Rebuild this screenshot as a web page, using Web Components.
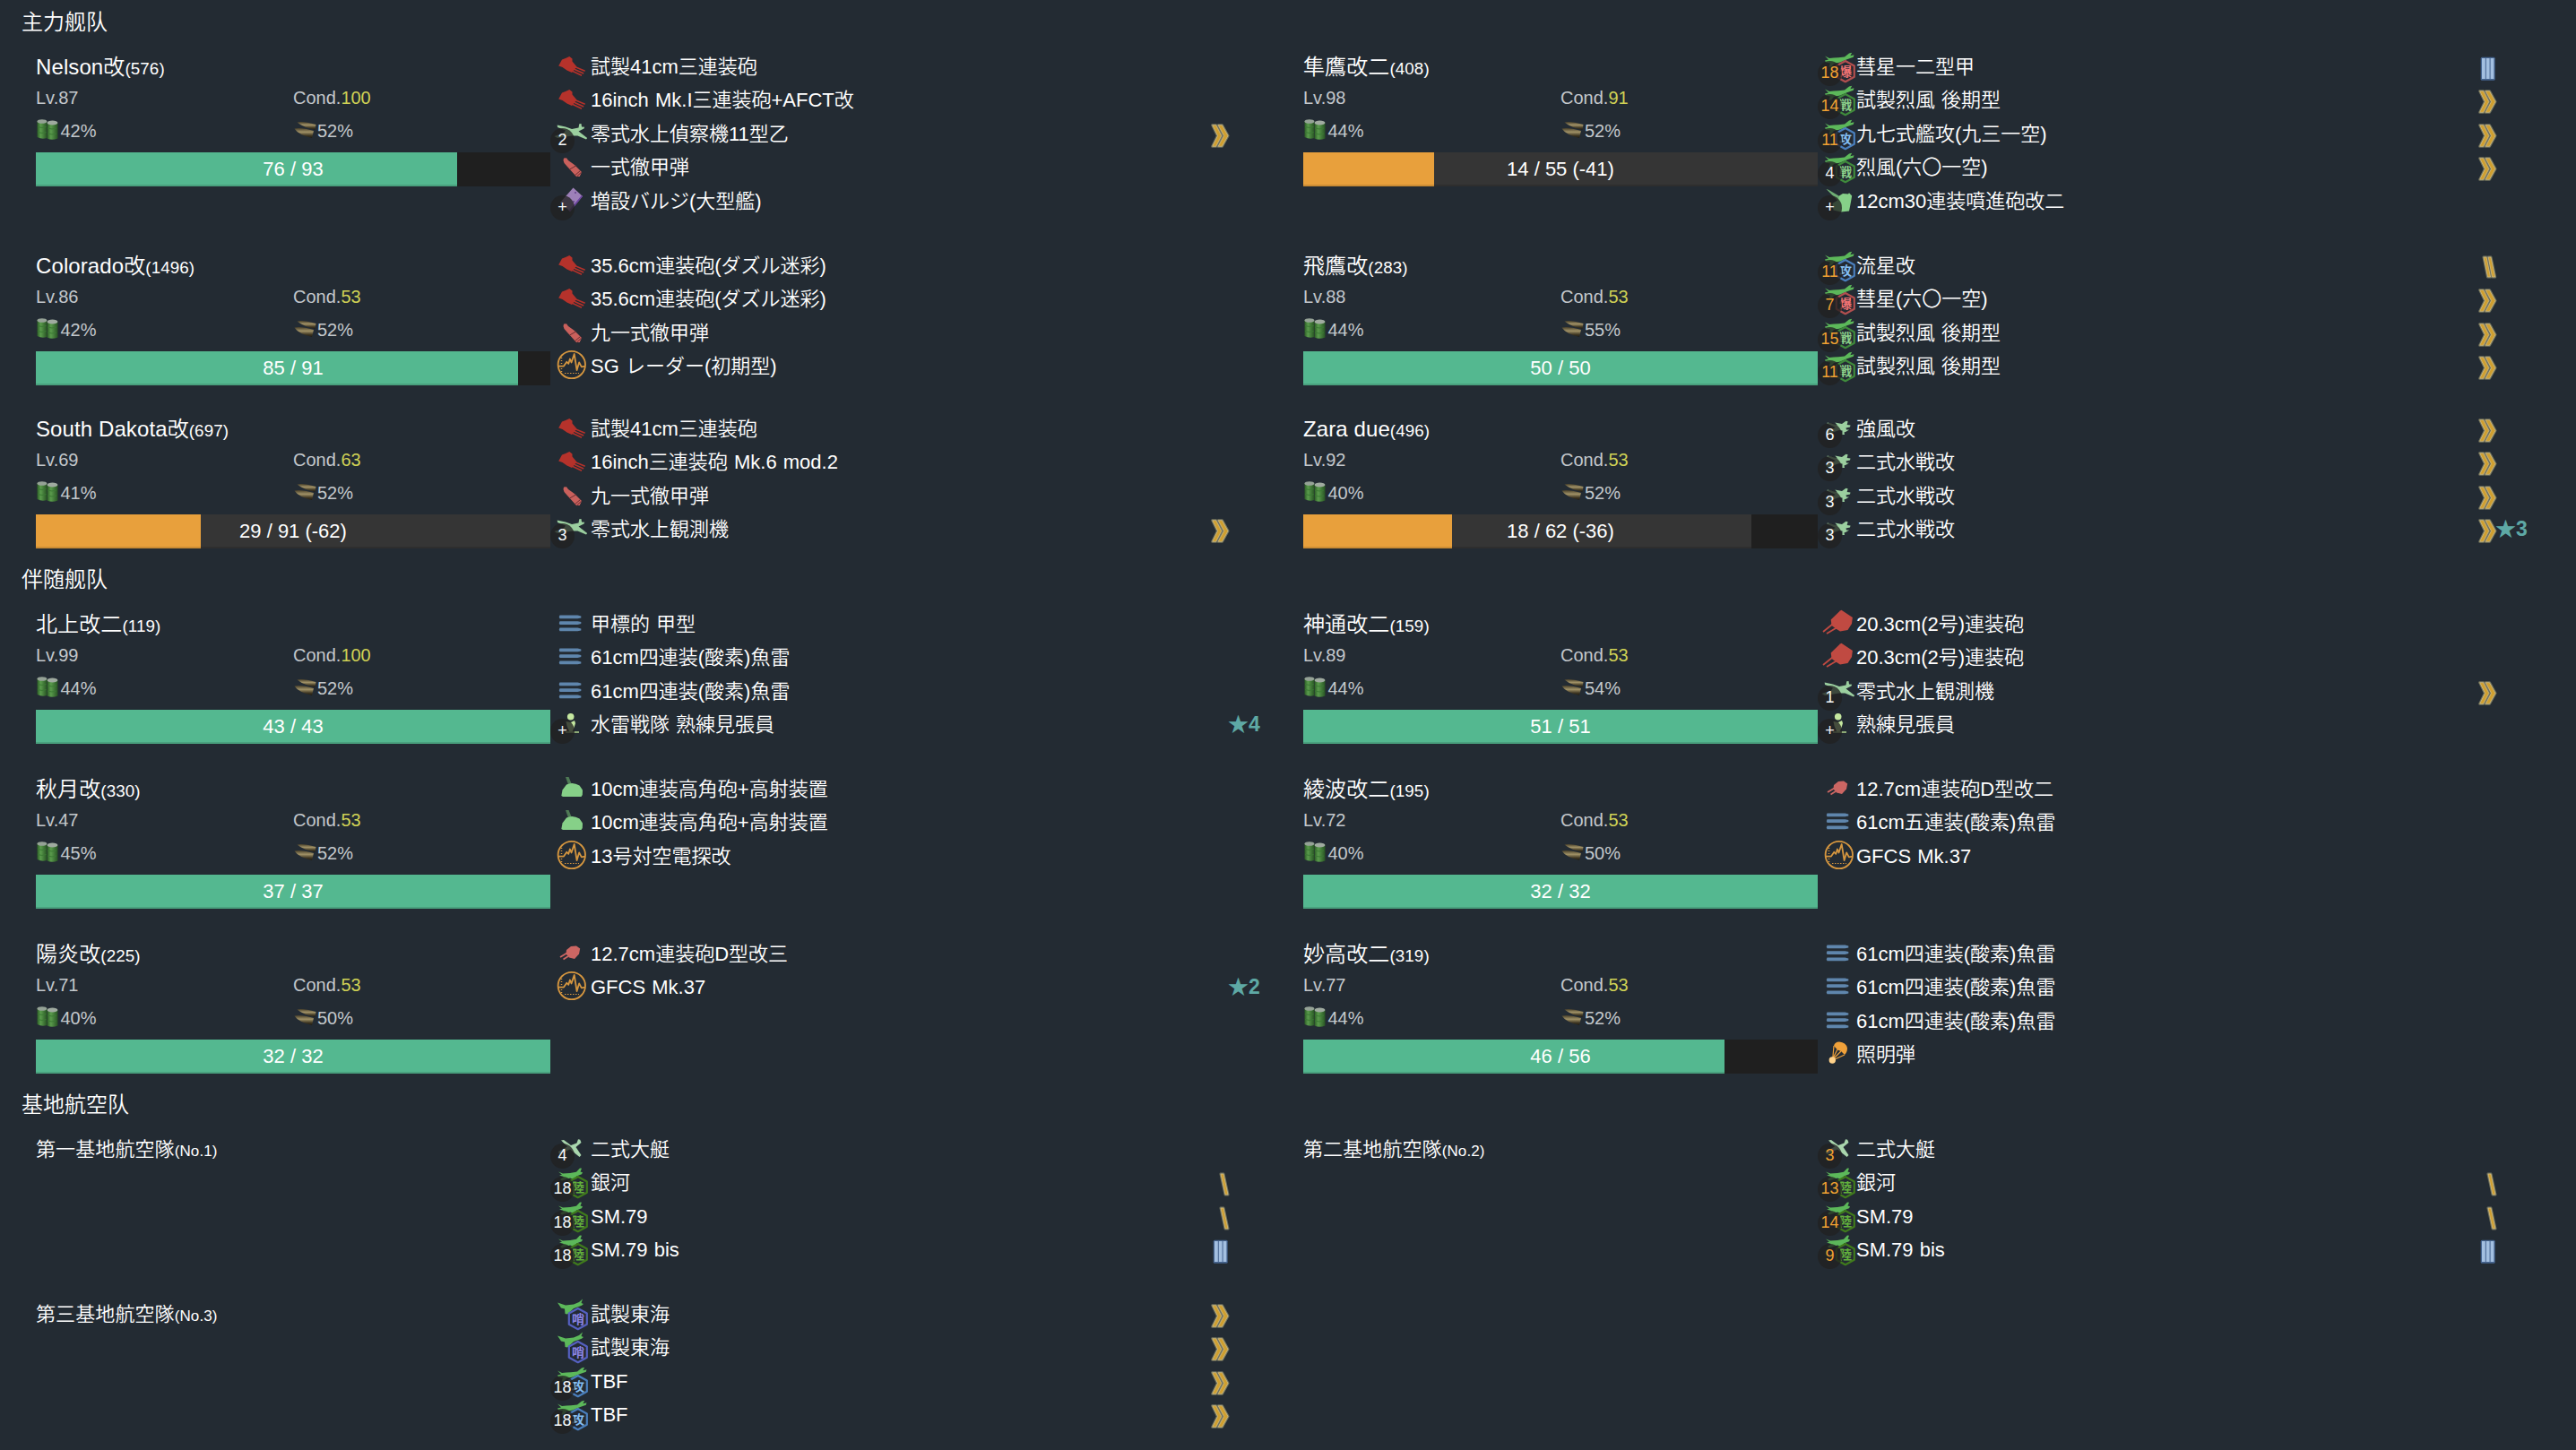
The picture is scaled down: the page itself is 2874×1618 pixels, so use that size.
<!DOCTYPE html>
<html lang="ja">
<head>
<meta charset="utf-8">
<title>主力舰队</title>
<style>
html, body { margin: 0; padding: 0; background: #232b33; }
body { font-family: "Liberation Sans", "Noto Sans CJK JP", sans-serif; font-weight: 350; color: #fff; font-size: 22px; overflow: hidden; }
</style>
</head>
<body>
<fleet-board></fleet-board>
<script>
/* ---------- icons, drawn on a 40x36 box ---------- */
const hex = (ring, ink, ch) =>
  `<path d="M26.800 12 L36.800 17.500 V29.700 L26.800 35.200 L16.800 29.700 V17.500Z" fill="#232b33" fill-opacity=".8" stroke="${ring}" stroke-width="2.200" stroke-linejoin="round"/>
   <text x="27" y="28.700" text-anchor="middle" font-size="14" font-weight="700" font-family="Noto Sans CJK JP, sans-serif" fill="${ink}">${ch}</text>`;
const carrierPlane = `<path d="M4 6.500 L9 9 Q14 8.300 19 8.200 L26 7.500 L31 3.500 L34.200 2.800 L32.400 6.200 L36.500 5.200 L35.800 7.800 L28 10.500 L21 13.500 L14 15 L11 18.500 L8.500 18.500 L10 14.500 L5 13.500 L4 11.500 L8 10.500Z" fill="#5cb85a"/>`;
const landPlane = `<path d="M5 6.500 L10 8.500 L18 8 L25 6.800 L29 2.500 L31 2.800 L29.500 6.500 L32 7.300 L31 9.300 L25 11.500 L26 14.500 L23.500 15.500 L18 13.500 L9 16.500 L7 15 L11 12 L6 10.500 L9 9.800Z" fill="#5cb85a"/>`;
const patrolPlane = `<path d="M4 5.500 L13 8.500 L22 7.500 L28 5 L32 1.500 L30.500 6 L33 7 L31 8.700 L22 12 L15 18.500 L12.500 18 L12 12.500 L8 11.500Z" fill="#5cb85a"/>`;
const ICONS = {
  gunL: `<path d="M5.200 17.500 L9 10.500 L13 9 L17.300 7 L20.500 9.500 L20.500 12.500 L25.500 18.500 L20 25 L14.500 22.500 L9.500 19Z" fill="#b5322b"/>
    <path d="M22 18 L34.700 23.300 M21 20.500 L33.200 26 M19 22.500 L31 28.300" stroke="#b5322b" stroke-width="1.500"/>`,
  gunM: `<path d="M10.700 13.500 L21 3.500 L22.500 2.800 L34.900 11 L34 18 L29.500 25 L21 26.500 L17 24 L11.500 20Z" fill="#c04a42"/>
    <path d="M12.500 18.500 L2 27 M17 22.500 L6 29" stroke="#c04a42" stroke-width="1.800"/>`,
  gunS: `<path d="M14 14 L19 10 L25 9.500 L29.200 12.600 L28 18.500 L23 24 L17 22.500 L13.500 18.500Z" fill="#cc6663"/>
    <path d="M14.500 17.500 L7 22 M16 21 L10.500 24.500" stroke="#cc6663" stroke-width="1.800"/>`,
  shell: `<path d="M11 8.500 L14 8.300 L16 11 L23 16 L31 24 L28.700 29 L25 29 L15 18 L11.500 14 L10.500 11Z" fill="#c9605c"/>
    <path d="M17.500 21 L24.500 17 M23.500 27.500 L29.500 22.500 M25.500 29 L30.800 24" stroke="#6e2e32" stroke-width="1"/>`,
  bulge: `<path d="M21.500 3.500 L32 13 L18 30 L7 20Z" fill="#9d80b8"/><path d="M32 13 L18 30 L17 28.500 L31 12" fill="#6a3fa0"/>
    <circle cx="24" cy="9" r=".9" fill="#5b3a85"/><circle cx="22" cy="19" r=".9" fill="#5b3a85"/>`,
  recon: `<path d="M3.700 8.500 L13 10.500 L20 13 L27.500 11.500 L28.300 7.300 L30.500 7 L31 10.500 L34.200 10.800 L33.500 12.500 L27.500 15.500 L37.200 23 L36 24.500 L26.500 20.500 L20 20.500 L4 23 L.5 21 L11 17.500 L13 14.500 L4 11Z" fill="#9bcf9f"/>`,
  floatFighter: `<path d="M15.300 11.500 L23 13 L27.500 9.700 L29.600 10.300 L28.700 14 L32.500 14.500 L32 16.400 L27.500 17.500 L28 19.500 L31 19.500 L28 21.500 L25.500 22.500 L26 25 L23.500 25 L23.500 20.500 L20 20 L7 24.500 L5 22 L16 17 L6 12.500 L7 11.500 L18 14.500Z" fill="#9bcf9f"/>`,
  boat: `<path d="M8 8.500 L11 8 L19 14 L25.500 11.500 L27 7.300 L29.200 7.800 L30.500 11 L24.500 16 L30.500 25 L28.500 27 L18 18.500 L6 24 L5 21 L15 15.500Z" fill="#a9d6ad"/>`,
  torpedo: [10.4, 17.1, 24.4].map(y => `<path d="M6.500 ${y - 1.900} H26.500 L30.300 ${y - 1} V${y + 1} L26.500 ${y + 1.900} H6.500 Q5 ${y} 6.500 ${y - 1.900}Z" fill="#5f86ad"/>`).join(''),
  radar: `<circle cx="19.800" cy="17" r="15.200" fill="none" stroke="#d5963f" stroke-width="1.800"/>
    <path d="M5 18.600 H11 L14.300 13.800 L16.300 15.800 L17.900 10.500 L19.500 14.500 L22.700 5 L25.600 23 L28.200 14.300 L30.800 19.300 L35 18.600" fill="none" stroke="#d5963f" stroke-width="1.800" stroke-linejoin="round"/>
    <path d="M12 26.500 H28" stroke="#d5963f" stroke-width="1.200" stroke-dasharray="1.500 1.500"/><path d="M8.500 9 V26" stroke="#d5963f" stroke-width="1.500" stroke-dasharray="1 2"/>`,
  lookout: `<circle cx="18.700" cy="9.800" r="3.800" fill="#c5e8a0"/><path d="M13.500 15 L19 16 L23 14 L24 17 L22.500 22 L20.300 27 L17.500 27 L14.500 20Z" fill="#c5e8a0"/><path d="M13 27 H28" stroke="#a9cc88" stroke-width="1.600"/>`,
  aaGun: `<path d="M13 5 L16.500 5 L20 13.500 L16.500 15Z" fill="#4f7a55"/><path d="M8.300 26 L9.500 19.500 L14 13.500 Q21 10 28.500 14.500 L32 19.500 L31.800 25 L30.500 27 L10 27Z" fill="#86d088"/>`,
  rocket: `<path d="M5.500 5 L8 5.800 L22 14 L19 18.500Z" fill="#6fae74"/><path d="M20 12.500 L24 10 L30 10.500 L31 9.300 L34.200 12.500 L32.500 22 L31 29.500 L22 30.500 L13.500 28.500 L12.500 21 L19 17Z" fill="#86d088"/>`,
  flare: `<path d="M14 9 Q15 4.500 20 4.500 Q27.500 5 29 11.500 Q29 16 26 19 L22 15 L18 13.500 Z" fill="#f0a13a"/>
    <path d="M14 9 L12.800 23 M18 13 L13 23 M22 15 L13.500 23.500 M26 19 L14 24.500" stroke="#f0a13a" stroke-width="1.200"/><circle cx="12.300" cy="25" r="3.700" fill="#ffd28a"/>`,
  bomber: carrierPlane + hex('#b14f4f', '#f27474', '爆'),
  fighter: carrierPlane + hex('#3f8a3c', '#8ad18a', '戦'),
  attacker: carrierPlane + hex('#4a7fbd', '#82bdf2', '攻'),
  land: landPlane + hex('#3f7a1c', '#62b03c', '陸'),
  patrol: patrolPlane + hex('#5560c0', '#8a84e6', '哨')
};
/* proficiency marks, 24x38 box */
const goldMark = d => `<g stroke-linejoin="round"><path d="${d}" fill="#858468" stroke="#858468" stroke-opacity=".8" stroke-width="3"/><path d="${d}" fill="#cf9f30" stroke="#d4c08a" stroke-width=".7"/></g>`;
const MARKS = {
  chevron: goldMark('M4.700 8.700 H8.700 L14.800 20.500 L8.700 32.300 H4.700 L10.500 20.500Z M11.200 8.700 H15.500 L22 20.500 L15.500 32.300 H11.200 L17.500 20.500Z'),
  slash2: goldMark('M9 9 H12 L16.500 31 H13.500Z M14.200 9 H17 L21.700 31 H18.500Z'),
  slash1: goldMark('M14 9 H17 L22 32 H19Z'),
  bars: `<rect x="5.700" y="7.700" width="16" height="26" rx="1.500" fill="#45648f"/>` + [7, 11.8, 16.6].map(x => `<rect x="${x}" y="9" width="3.800" height="23" fill="#a3bfe0"/>`).join('')
};

class EquipIcon extends HTMLElement {
  connectedCallback() {
    const slot = this.getAttribute('count');
    this.attachShadow({ mode: 'open' }).innerHTML = `<style>
      :host { display: block; position: relative; width: 40px; height: 36px; flex: none; }
      svg { display: block; width: 40px; height: 36px; overflow: visible; }
      .count { position: absolute; left: -4px; top: 12px; width: 27px; height: 28px; border-radius: 50%;
        background: rgba(33,33,33,.78); font-size: 18px; line-height: 26px; text-align: center; color: #f5f8fa; }
      .count.low { color: #f0a132; }
    </style><svg viewBox="0 0 40 36">${ICONS[this.getAttribute('name')]}</svg>
    ${slot ? `<div class="count ${this.hasAttribute('low') ? 'low' : ''}">${slot}</div>` : ''}`;
  }
}
customElements.define('equip-icon', EquipIcon);

class EquipItem extends HTMLElement {
  connectedCallback() {
    const mark = this.getAttribute('mark'), star = this.getAttribute('star');
    this.attachShadow({ mode: 'open' }).innerHTML = `<style>
      :host { display: flex; height: 37.4px; align-items: flex-start; }
      .name { flex: 1; margin-left: var(--name-gap, 1px); line-height: 37px; white-space: nowrap; word-spacing: 1px; }
      svg { display: block; width: 24px; height: 38px; }
      .mark { width: 24px; flex: none; }
      .star { width: 40px; margin-left: -2px; flex: none; font-size: 23px; font-weight: 700; color: #5ea9a5; line-height: 37px; white-space: nowrap; }
    </style><equip-icon name="${this.getAttribute('icon')}" ${this.hasAttribute('count') ? `count="${this.getAttribute('count')}"` : ''} ${this.hasAttribute('low') ? 'low' : ''}></equip-icon>
    <div class="name"><slot></slot></div>
    <div class="mark">${mark ? `<svg viewBox="0 0 24 38">${MARKS[mark]}</svg>` : ''}</div>
    <div class="star">${star ? '★' + star : ''}</div>`;
  }
}
customElements.define('equip-item', EquipItem);

class HpBar extends HTMLElement {
  connectedCallback() {
    const a = n => this.getAttribute(n);
    this.attachShadow({ mode: 'open' }).innerHTML = `<style>
      :host { display: grid; height: 38px; background: #1f1f1f; }
      div { grid-area: 1 / 1; height: 38px; box-shadow: inset 0 -2px rgba(0,0,0,.12); }
      .lost { background: #353535; }
      .now { background: ${a('tone') === 'warn' ? '#e8a03c' : '#54b890'}; }
      span { grid-area: 1 / 1; text-align: center; line-height: 37px; color: #fff; z-index: 1; }
    </style>${a('before') ? `<div class="lost" style="width:${a('before')}px"></div>` : ''}
    <div class="now" style="width:${a('now')}px"></div><span><slot></slot></span>`;
  }
}
customElements.define('hp-bar', HpBar);

class SupplyLevel extends HTMLElement {
  connectedCallback() {
    const fuel = this.getAttribute('kind') === 'fuel';
    const art = fuel ? `
      <defs><linearGradient id="g"><stop offset="0" stop-color="#2c5c26"/><stop offset=".35" stop-color="#5a9c4c"/><stop offset="1" stop-color="#285424"/></linearGradient></defs>
      <path d="M1.500 3 V21 Q7 24 12.300 22 V3Z" fill="url(#g)"/><ellipse cx="6.900" cy="3.500" rx="5.400" ry="2.300" fill="#95a296"/>
      <path d="M12.600 5 V22.500 Q18 25 24.500 22.500 V5Z" fill="url(#g)"/><ellipse cx="18.500" cy="5" rx="5.900" ry="2.500" fill="#a0aba0"/>
      <path d="M2 9.500 Q7 11.500 11.500 9.500 M2 15.500 Q7 17.500 11.500 15.500 M13 11 Q18 13 23 11 M13 17 Q18 19 23 17" stroke="#3b7a34" fill="none"/>` : `
      <defs><linearGradient id="g" x2="0" y2="1"><stop offset="0" stop-color="#443c27"/><stop offset=".4" stop-color="#a09166"/><stop offset=".75" stop-color="#3f3723"/><stop offset="1" stop-color="#1f1b12"/></linearGradient></defs>
      <path d="M4.500 4.500 Q10 2.500 25.500 7 L24.500 13 Q12 10.500 4.500 4.500Z" fill="url(#g)"/><path d="M1.500 11.500 Q8 9.500 23 14 L21 22 Q6 18.500 1.500 11.500Z" fill="url(#g)"/>`;
    this.attachShadow({ mode: 'open' }).innerHTML = `<style>
      :host { display: flex; width: 287px; align-items: flex-start; gap: ${fuel ? 1.500 : 1}px; }
      svg { display: block; width: 26px; height: 26px; margin-top: 3px; }
    </style><svg viewBox="0 0 26 26">${art}</svg><slot></slot>`;
  }
}
customElements.define('supply-level', SupplyLevel);

class ShipCard extends HTMLElement {
  connectedCallback() {
    const a = n => this.getAttribute(n);
    const ship = this.hasAttribute('lv');
    this.attachShadow({ mode: 'open' }).innerHTML = `<style>
      :host { display: flex; width: 1370px; gap: 4px; }
      .info { width: 574px; flex: none; }
      .name { height: 37px; line-height: 40px; font-size: ${ship ? 24 : 22}px; white-space: nowrap; letter-spacing: .1px; }
      small { font-size: ${ship ? 18.8 : 17}px; }
      .line { display: flex; height: 36px; line-height: 35px; font-size: 20px; color: #c3c8cc; }
      .line > div { width: 287.5px; }
      .supply { height: 35px; padding-top: 1px; }
      b { font-weight: 400; color: #cfd155; }
      hp-bar { margin-top: 6px; }
      .equips { flex: 1; padding-top: 1px; }
    </style>
    <div class="info"><div class="name">${a('name')}<small>(${a('no')})</small></div>
    ${ship ? `<div class="line"><div>Lv.${a('lv')}</div><div>Cond.<b>${a('cond')}</b></div></div>
      <div class="line supply"><supply-level kind="fuel">${a('fuel')}%</supply-level><supply-level kind="ammo">${a('ammo')}%</supply-level></div>
      <hp-bar now="${a('now')}" before="${a('before') || ''}" tone="${a('tone') || ''}">${a('hp')}</hp-bar>` : ''}</div>
    <div class="equips"><slot></slot></div>`;
  }
}
customElements.define('ship-card', ShipCard);

class FleetSection extends HTMLElement {
  connectedCallback() {
    this.attachShadow({ mode: 'open' }).innerHTML = `<style>
      :host { display: block; }
      h2 { margin: 0; height: 55px; padding-left: 24px; font: 350 24px/49px "Liberation Sans", "Noto Sans CJK SC", sans-serif; }
    </style><h2>${this.getAttribute('heading')}</h2><slot></slot>`;
  }
}
customElements.define('fleet-section', FleetSection);

class FleetRow extends HTMLElement {
  connectedCallback() {
    this.attachShadow({ mode: 'open' }).innerHTML = `<style>
      :host { display: flex; gap: 44px; padding-left: 40px; height: ${this.getAttribute('size')}px; }
      ::slotted(:nth-child(2)) { --name-gap: -1px; }
    </style><slot></slot>`;
  }
}
customElements.define('fleet-row', FleetRow);

/* ---------- data ---------- */
const e = (icon, name, o = {}) => ({ icon, name, ...o });
const s = (name, no, lv, cond, fuel, ammo, hp, now, items, o = {}) => ({ name, no, lv, cond, fuel, ammo, hp, now, items, ...o });
const C = 'chevron';
const oxy4 = '61cm四連装(酸素)魚雷';
const wing = (n, counts, low) => ({ name: n[0], no: n[1], items: [
  e('boat', '二式大艇', { count: counts[0], low }), e('land', '銀河', { count: counts[1], low, mark: 'slash1' }),
  e('land', 'SM.79', { count: counts[2], low, mark: 'slash1' }), e('land', 'SM.79 bis', { count: counts[3], low, mark: 'bars' })] });
const DATA = [
  { heading: '主力舰队', rows: [
    [222, s('Nelson改', 576, 87, 100, 42, 52, '76 / 93', 470, [
        e('gunL', '試製41cm三連装砲'), e('gunL', '16inch Mk.I三連装砲+AFCT改'), e('recon', '零式水上偵察機11型乙', { count: '2', mark: C }),
        e('shell', '一式徹甲弾'), e('bulge', '増設バルジ(大型艦)', { count: '+' })]),
      s('隼鷹改二', 408, 98, 91, 44, 52, '14 / 55 (-41)', 146, [
        e('bomber', '彗星一二型甲', { count: '18', low: 1, mark: 'bars' }), e('fighter', '試製烈風 後期型', { count: '14', low: 1, mark: C }),
        e('attacker', '九七式艦攻(九三一空)', { count: '11', low: 1, mark: C }), e('fighter', '烈風(六〇一空)', { count: '4', mark: C }),
        e('rocket', '12cm30連装噴進砲改二', { count: '+' })], { before: 574, tone: 'warn' })],
    [182, s('Colorado改', 1496, 86, 53, 42, 52, '85 / 91', 538, [
        e('gunL', '35.6cm連装砲(ダズル迷彩)'), e('gunL', '35.6cm連装砲(ダズル迷彩)'), e('shell', '九一式徹甲弾'), e('radar', 'SG レーダー(初期型)')]),
      s('飛鷹改', 283, 88, 53, 44, 55, '50 / 50', 574, [
        e('attacker', '流星改', { count: '11', low: 1, mark: 'slash2' }), e('bomber', '彗星(六〇一空)', { count: '7', low: 1, mark: C }),
        e('fighter', '試製烈風 後期型', { count: '15', low: 1, mark: C }), e('fighter', '試製烈風 後期型', { count: '11', low: 1, mark: C })])],
    [163, s('South Dakota改', 697, 69, 63, 41, 52, '29 / 91 (-62)', 184, [
        e('gunL', '試製41cm三連装砲'), e('gunL', '16inch三連装砲 Mk.6 mod.2'), e('shell', '九一式徹甲弾'), e('recon', '零式水上観測機', { count: '3', mark: C })], { before: 574, tone: 'warn' }),
      s('Zara due', 496, 92, 53, 40, 52, '18 / 62 (-36)', 166, [
        e('floatFighter', '強風改', { count: '6', mark: C }), e('floatFighter', '二式水戦改', { count: '3', mark: C }),
        e('floatFighter', '二式水戦改', { count: '3', mark: C }), e('floatFighter', '二式水戦改', { count: '3', mark: C, star: 3 })], { before: 500, tone: 'warn' })]] },
  { heading: '伴随舰队', rows: [
    [184, s('北上改二', 119, 99, 100, 44, 52, '43 / 43', 574, [
        e('torpedo', '甲標的 甲型'), e('torpedo', oxy4), e('torpedo', oxy4), e('lookout', '水雷戦隊 熟練見張員', { count: '+', star: 4 })]),
      s('神通改二', 159, 89, 53, 44, 54, '51 / 51', 574, [
        e('gunM', '20.3cm(2号)連装砲'), e('gunM', '20.3cm(2号)連装砲'), e('recon', '零式水上観測機', { count: '1', mark: C }), e('lookout', '熟練見張員', { count: '+' })])],
    [184, s('秋月改', 330, 47, 53, 45, 52, '37 / 37', 574, [
        e('aaGun', '10cm連装高角砲+高射装置'), e('aaGun', '10cm連装高角砲+高射装置'), e('radar', '13号対空電探改')]),
      s('綾波改二', 195, 72, 53, 40, 50, '32 / 32', 574, [
        e('gunS', '12.7cm連装砲D型改二'), e('torpedo', '61cm五連装(酸素)魚雷'), e('radar', 'GFCS Mk.37')])],
    [163, s('陽炎改', 225, 71, 53, 40, 50, '32 / 32', 574, [
        e('gunS', '12.7cm連装砲D型改三'), e('radar', 'GFCS Mk.37', { star: 2 })]),
      s('妙高改二', 319, 77, 53, 44, 52, '46 / 56', 470, [
        e('torpedo', oxy4), e('torpedo', oxy4), e('torpedo', oxy4), e('flare', '照明弾')])]] },
  { heading: '基地航空队', rows: [
    [184, wing(['第一基地航空隊', 'No.1'], ['4', '18', '18', '18'], 0), wing(['第二基地航空隊', 'No.2'], ['3', '13', '14', '9'], 1)],
    [160, { name: '第三基地航空隊', no: 'No.3', items: [
      e('patrol', '試製東海', { mark: C }), e('patrol', '試製東海', { mark: C }),
      e('attacker', 'TBF', { count: '18', mark: C }), e('attacker', 'TBF', { count: '18', mark: C })] }]] }
];
const attrs = (o, skip) => Object.entries(o).filter(([k, v]) => !skip.includes(k) && v !== undefined && v !== 0).map(([k, v]) => `${k}="${v}"`).join(' ');

class FleetBoard extends HTMLElement {
  connectedCallback() {
    this.attachShadow({ mode: 'open' }).innerHTML = `<style>:host { display: block; width: 2874px; height: 1618px; overflow: hidden; }</style>` +
      DATA.map(sec => `<fleet-section heading="${sec.heading}">${sec.rows.map(([size, ...ships]) =>
        `<fleet-row size="${size}">${ships.map(sh => `<ship-card ${attrs(sh, ['items'])}>${sh.items.map(it =>
          `<equip-item ${attrs(it, ['name'])}>${it.name}</equip-item>`).join('')}</ship-card>`).join('')}</fleet-row>`).join('')}</fleet-section>`).join('');
  }
}
customElements.define('fleet-board', FleetBoard);
</script>
</body>
</html>
